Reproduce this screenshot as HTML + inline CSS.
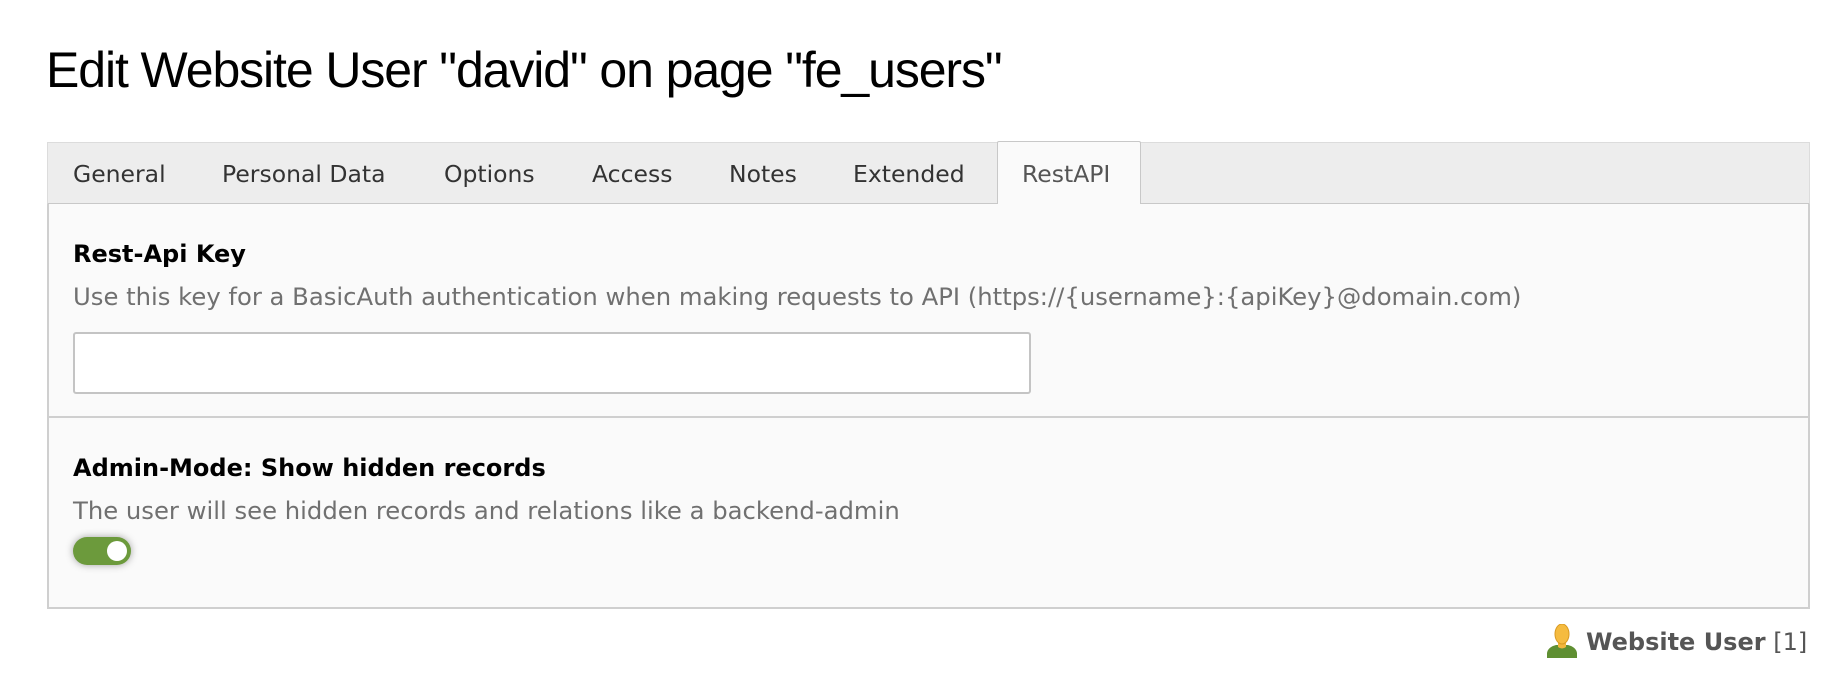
<!DOCTYPE html>
<html><head><meta charset="utf-8"><style>
*{margin:0;padding:0;box-sizing:border-box}
body{width:1838px;height:681px;background:#fff;position:relative;overflow:hidden;font-family:"DejaVu Sans","Liberation Sans",sans-serif}
.a{position:absolute;white-space:nowrap}
h1{position:absolute;left:46px;top:41px;font-family:"Liberation Sans",sans-serif;font-weight:400;font-size:50px;letter-spacing:-1.1px;color:#000;white-space:nowrap}
.bar{position:absolute;left:47px;top:142px;width:1763px;height:63px;background:#ededed;border:1px solid #dcdcdc;border-bottom:2px solid #c8c8c8}
.tab{position:absolute;top:160px;font-size:23.5px;color:#333}
.active{position:absolute;left:997px;top:141px;width:144px;height:65px;background:#fafafa;border:1px solid #c8c8c8;border-bottom:none;border-radius:2px 2px 0 0}
.panel{position:absolute;left:47px;top:204px;width:1763px;height:405px;background:#fafafa;border:2px solid #cfcfcf;border-top:none}
.div{position:absolute;left:47px;top:416px;width:1763px;height:2px;background:#cfcfcf}
.lbl{font-weight:bold;font-size:24px;color:#000}
.desc{font-size:24.3px;color:#707070}
.inp{position:absolute;left:73px;top:332px;width:958px;height:62px;background:#fff;border:2px solid #c4c4c4;border-radius:3px}
.tog{position:absolute;left:73px;top:537px;width:58px;height:28px;border-radius:14px;background:#6c9a3c;box-shadow:0 0 8px rgba(0,0,0,.35)}
.tog::after{content:"";position:absolute;right:4px;top:4px;width:20px;height:20px;border-radius:50%;background:#fff}
</style></head><body>
<h1>Edit Website User "david" on page "fe_users"</h1>
<div class="bar"></div>
<div class="active"></div>
<div class="panel"></div>
<div class="div"></div>
<div class="a tab" style="left:73px">General</div>
<div class="a tab" style="left:222px">Personal Data</div>
<div class="a tab" style="left:444px">Options</div>
<div class="a tab" style="left:592px">Access</div>
<div class="a tab" style="left:729px">Notes</div>
<div class="a tab" style="left:853px">Extended</div>
<div class="a tab" style="left:1022px;color:#555">RestAPI</div>
<div class="a lbl" style="left:73px;top:240px">Rest-Api Key</div>
<div class="a desc" style="left:73px;top:282px">Use this key for a BasicAuth authentication when making requests to API (https://{username}:{apiKey}@domain.com)</div>
<div class="inp"></div>
<div class="a lbl" style="left:73px;top:454px">Admin-Mode: Show hidden records</div>
<div class="a desc" style="left:73px;top:496px">The user will see hidden records and relations like a backend-admin</div>
<div class="tog"></div>
<svg class="a" style="left:1546px;top:624px" width="32" height="34" viewBox="0 0 32 34">
<path d="M1 34 L1 29 Q2 23 10 21 L22 21 Q30 23 31 29 L31 34 Z" fill="#5f8f32"/>
<path d="M12 18 L12 23 Q16 26 20 23 L20 18 Z" fill="#f2b63c"/>
<ellipse cx="16" cy="10" rx="7" ry="10" fill="#f5bb3f" stroke="#d99a22" stroke-width="1"/>
</svg>
<div class="a" style="left:1586px;top:628px;font-size:24px;color:#555"><b>Website User</b> [1]</div>
</body></html>
